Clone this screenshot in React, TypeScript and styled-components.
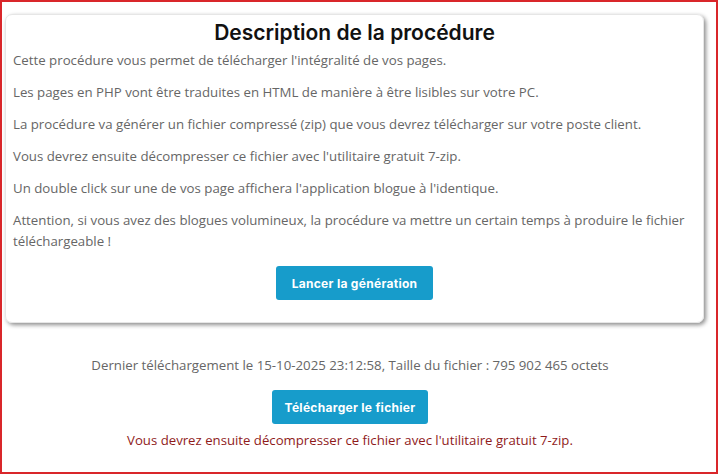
import React from "react";
import styled, { createGlobalStyle } from "styled-components";

const Global = createGlobalStyle`
  html, body { margin: 0; padding: 0; background: #fff; }
  body { font-family: "Open Sans", "Liberation Sans", sans-serif; }
`;

const Frame = styled.div`
  box-sizing: border-box;
  width: 718px;
  height: 474px;
  border: 2px solid #d9262a;
  padding: 12px 12px 0 3px;
  display: flex;
  flex-direction: column;
`;

const Card = styled.section`
  box-sizing: border-box;
  border: 1px solid #e6e6e6;
  border-radius: 7px;
  box-shadow: 2px 2px 4px rgba(0, 0, 0, 0.45);
  padding: 4px 7px 22px 7px;
  display: flex;
  flex-direction: column;
`;

const Footer = styled.div`
  margin: 32px 9px 0 0;
  display: flex;
  flex-direction: column;
  align-items: center;
`;

const Title = styled.h1`
  margin: 0 0 3px 0;
  text-align: center;
  font-family: Inter, "Liberation Sans", sans-serif;
  font-weight: 600;
  font-size: 21px;
  line-height: 28px;
  color: #111;
`;

const Para = styled.p`
  margin: 0 0 11px 0;
  font-size: 13.25px;
  line-height: 21px;
  color: #666;
`;

const Button = styled.button<{ $mt?: number; $px?: number }>`
  align-self: center;
  margin-top: ${(p) => p.$mt ?? 0}px;
  height: 34px;
  padding: 0 ${(p) => p.$px ?? 16}px;
  border: none;
  border-radius: 3px;
  background: #179ccb;
  color: #fff;
  font-family: Inter, "Liberation Sans", sans-serif;
  font-weight: 700;
  font-size: 12px;
  letter-spacing: 0.3px;
  cursor: pointer;
`;

const Info = styled.p`
  margin: 0;
  font-size: 13.25px;
  line-height: 21px;
  color: #666;
  text-align: center;
`;

const Warning = styled.p`
  margin: 6px 0 0 0;
  font-size: 13.2px;
  line-height: 21px;
  color: #8f1b1b;
  text-align: center;
`;

export default function App() {
  return (
    <>
      <Global />
      <Frame>
        <Card>
          <Title>Description de la procédure</Title>
          <Para>Cette procédure vous permet de télécharger l'intégralité de vos pages.</Para>
          <Para>Les pages en PHP vont être traduites en HTML de manière à être lisibles sur votre PC.</Para>
          <Para>La procédure va générer un fichier compressé (zip) que vous devrez télécharger sur votre poste client.</Para>
          <Para>Vous devrez ensuite décompresser ce fichier avec l'utilitaire gratuit 7-zip.</Para>
          <Para>Un double click sur une de vos page affichera l'application blogue à l'identique.</Para>
          <Para>Attention, si vous avez des blogues volumineux, la procédure va mettre un certain temps à produire le fichier téléchargeable !</Para>
          <Button $mt={3}>Lancer la génération</Button>
        </Card>
        <Footer>
          <Info>Dernier téléchargement le 15-10-2025 23:12:58, Taille du fichier : 795 902 465 octets</Info>
          <Button $mt={14} $px={13}>Télécharger le fichier</Button>
          <Warning>Vous devrez ensuite décompresser ce fichier avec l'utilitaire gratuit 7-zip.</Warning>
        </Footer>
      </Frame>
    </>
  );
}
